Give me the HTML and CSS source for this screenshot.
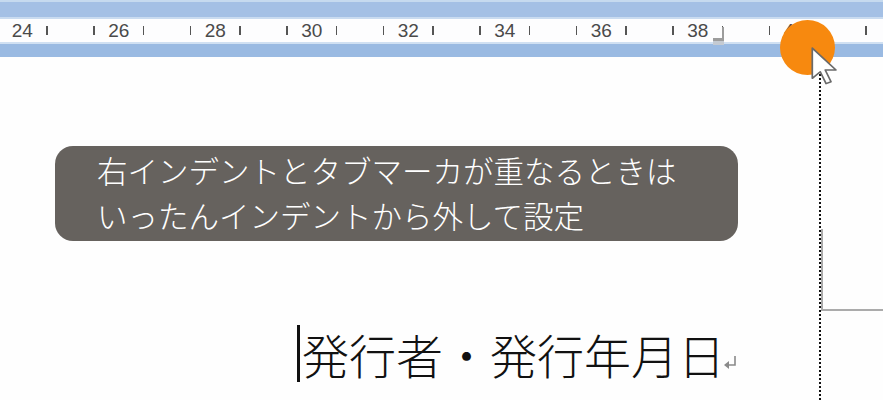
FILE: index.html
```html
<!DOCTYPE html>
<html lang="ja">
<head>
<meta charset="utf-8">
<link rel="stylesheet" href="styles.css">
</head>
<body>
<div class="screen">
  <div class="ruler-wrap">
    <div class="ruler-top"></div>
    <div class="ruler">
      <div class="unit first"><span class="tick"></span><span class="num">24</span><span class="tick"></span></div>
      <div class="unit"><span class="tick"></span><span class="num">26</span><span class="tick"></span></div>
      <div class="unit"><span class="tick"></span><span class="num">28</span><span class="tick"></span></div>
      <div class="unit"><span class="tick"></span><span class="num">30</span><span class="tick"></span></div>
      <div class="unit"><span class="tick"></span><span class="num">32</span><span class="tick"></span></div>
      <div class="unit"><span class="tick"></span><span class="num">34</span><span class="tick"></span></div>
      <div class="unit"><span class="tick"></span><span class="num">36</span><span class="tick"></span></div>
      <div class="unit"><span class="tick"></span><span class="num">38</span><span class="tick"></span></div>
      <div class="unit"><span class="tick"></span><span class="num">40</span><span class="tick"></span></div>
      <div class="unit"><span class="tick"></span><span class="num"></span><span class="tick"></span></div>
    </div>
    <div class="ruler-bottom"></div>
  </div>

  <div class="page">
    <div class="main">
      <div class="callout">右インデントとタブマーカが重なるときは<br>いったんインデントから外して設定</div>
      <div class="docline">
        <span class="caret"></span>
        <span class="doctext">発行者・発行年月日</span>
        <svg class="ret" width="14" height="16" viewBox="0 0 14 16"><path d="M12 1 V10 H3" fill="none" stroke="#8a8a8a" stroke-width="1.6"/><path d="M1 10 L6 6 V14 Z" fill="#8a8a8a"/></svg>
      </div>
    </div>
    <div class="margin-col">
      <div class="frame"></div>
    </div>
  </div>

  <svg class="tabmark" width="14" height="20" viewBox="0 0 14 20"><rect x="10" y="0" width="2" height="14" fill="#9c9c9c"/><rect x="1" y="11" width="11" height="3" fill="#9c9c9c"/><rect x="1" y="14" width="11" height="4" fill="#c4cad2"/></svg>
  <div class="spot"></div>
  <svg class="pointer" width="28" height="38" viewBox="0 0 13 20" preserveAspectRatio="none"><path d="M0.6 0.6 V16.5 L4.3 13 L7 19.3 L9.3 18.3 L6.6 12.1 H11.6 Z" fill="#ffffff" stroke="#6a6a6a" stroke-width="0.8" stroke-linejoin="round"/></svg>
</div>
</body>
</html>
```

FILE: styles.css
```css
html, body {
  margin: 0;
  padding: 0;
  background: #ffffff;
}
.screen {
  position: relative;
  width: 883px;
  height: 400px;
  overflow: hidden;
  background: #fefefe;
}
.ruler-wrap {
  display: flex;
  flex-direction: column;
}
.ruler-top {
  height: 15px;
  border-top: 2px solid #c6daef;
  border-bottom: 2px solid #c9dbf0;
  background: #a4c0e5;
}
.ruler {
  height: 23px;
  background: #fdfdfe;
  display: flex;
  align-items: center;
  overflow: hidden;
  white-space: nowrap;
}
.unit {
  flex: 0 0 96.5px;
  display: flex;
  justify-content: center;
  align-items: center;
}
.unit.first {
  margin-left: -26px;
}
.tick {
  width: 1.5px;
  height: 9px;
  background: #555555;
}
.num {
  width: 48px;
  text-align: center;
  font-family: "Liberation Sans", Arial, sans-serif;
  font-size: 19px;
  line-height: 22px;
  color: #4a4a4a;
}
.ruler-bottom {
  height: 13px;
  border-top: 2px solid #d0e0f2;
  background: #9abae2;
}
.page {
  display: flex;
  height: 343px;
}
.main {
  width: 819px;
  padding-top: 89px;
  box-sizing: border-box;
}
.callout {
  margin-left: 55px;
  width: 683px;
  height: 95px;
  box-sizing: border-box;
  padding: 2px 0 0 42px;
  border-radius: 18px;
  background: #66625e;
  color: #ffffff;
  font-family: "Noto Sans CJK JP", sans-serif;
  font-size: 30.5px;
  line-height: 45px;
  font-weight: 300;
  white-space: nowrap;
}
.docline {
  margin-top: 84px;
  margin-left: 297px;
  display: flex;
  align-items: flex-start;
}
.caret {
  width: 3px;
  height: 57px;
  background: #111111;
}
.doctext {
  margin-left: 2px;
  font-family: "Noto Sans CJK JP", sans-serif;
  font-size: 47px;
  line-height: 57px;
  font-weight: 300;
  color: #111111;
  white-space: nowrap;
}
.ret {
  margin-left: -2px;
  margin-top: 30px;
}
.margin-col {
  flex: 1;
  border-left: 2px dotted #111111;
}
.frame {
  margin-top: 172px;
  height: 80px;
  border-left: 2px solid #ababab;
  border-bottom: 2px solid #ababab;
}
.tabmark {
  position: absolute;
  left: 712px;
  top: 27px;
}
.spot {
  position: absolute;
  left: 780px;
  top: 20px;
  width: 55px;
  height: 55px;
  border-radius: 50%;
  background: #f7890f;
  filter: blur(0.7px);
}
.pointer {
  position: absolute;
  left: 811px;
  top: 47px;
}
```
